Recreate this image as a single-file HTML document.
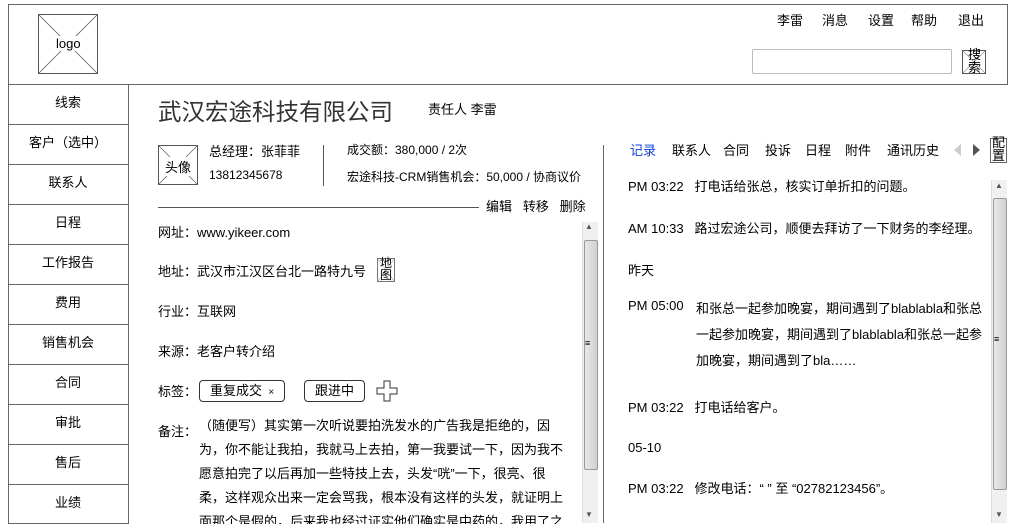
<!DOCTYPE html>
<html><head><meta charset="utf-8"><style>
*{margin:0;padding:0;box-sizing:border-box}
body{width:1028px;height:532px;background:#fff;position:relative;overflow:hidden;font-family:"Liberation Sans","Noto Sans CJK SC",sans-serif;font-size:13px;color:#000}
.a{position:absolute;white-space:nowrap}
.xbox{position:absolute;border:1px solid #555;background:#fff}
.xbox svg{position:absolute;left:0;top:0;width:100%;height:100%}
.nav div{position:absolute;left:8px;width:120px;height:40px;border-top:1px solid #666;text-align:center;line-height:36px}
.sb{position:absolute;width:16px;background:#f0f0f0;border-left:1px solid #ddd}
.thumb{position:absolute;left:1px;width:14px;background:linear-gradient(90deg,#e8e8e8,#d0d0d0);border:1px solid #999;border-radius:2px}
.tag{position:absolute;border:1px solid #333;border-radius:4px;height:22px;line-height:20px;padding:0 10px}
</style></head><body>
<div style="position:absolute;left:8px;top:4px;width:1000px;height:81px;border:1px solid #666"></div>
<div class="xbox" style="left:38px;top:14px;width:60px;height:60px"><svg viewBox="0 0 60 60" preserveAspectRatio="none"><path d="M0 0L60 60M60 0L0 60" stroke="#555" stroke-width="0.8"/></svg><div class="a" style="left:17px;top:21px;background:#fff">logo</div></div>
<div class="a" style="left:777px;top:10px">李雷</div>
<div class="a" style="left:822px;top:10px">消息</div>
<div class="a" style="left:868px;top:10px">设置</div>
<div class="a" style="left:911px;top:10px">帮助</div>
<div class="a" style="left:958px;top:10px">退出</div>
<div style="position:absolute;left:752px;top:49px;width:200px;height:25px;border:1px solid #bbb;border-radius:2px"></div>
<div class="xbox" style="left:962px;top:50px;width:24px;height:24px"><svg viewBox="0 0 24 24" preserveAspectRatio="none"><path d="M0 0L24 24M24 0L0 24" stroke="#777" stroke-width="0.6"/></svg><div class="a" style="left:5px;top:-3px;line-height:13px;font-size:13px">搜<br>索</div></div>

<div style="position:absolute;left:8px;top:84px;width:121px;height:440px;border-left:1px solid #666;border-right:1px solid #666;border-bottom:1px solid #666"></div>
<div class="nav">
<div style="top:84px">线索</div><div style="top:124px">客户（选中）</div><div style="top:164px">联系人</div><div style="top:204px">日程</div><div style="top:244px">工作报告</div><div style="top:284px">费用</div><div style="top:324px">销售机会</div><div style="top:364px">合同</div><div style="top:404px">审批</div><div style="top:444px">售后</div><div style="top:484px">业绩</div>
</div>

<div class="a" style="left:158px;top:93px;font-size:23.5px;color:#333">武汉宏途科技有限公司</div>
<div class="a" style="left:428px;top:99px">责任人 李雷</div>
<div class="xbox" style="left:158px;top:145px;width:40px;height:40px"><svg viewBox="0 0 40 40" preserveAspectRatio="none"><path d="M0 0L40 40M40 0L0 40" stroke="#555" stroke-width="0.7"/></svg><div class="a" style="left:6px;top:11px;background:#fff">头像</div></div>
<div class="a" style="left:209px;top:141px">总经理：张菲菲</div>
<div class="a" style="left:209px;top:168px;font-size:12px">13812345678</div>
<div style="position:absolute;left:323px;top:145px;width:1px;height:41px;background:#555"></div>
<div class="a" style="left:347px;top:141px;font-size:12px">成交额：380,000 / 2次</div>
<div class="a" style="left:347px;top:168px;font-size:12px">宏途科技-CRM销售机会：50,000 / 协商议价</div>
<div style="position:absolute;left:158px;top:207px;width:321px;height:1px;background:#555"></div>
<div class="a" style="left:486px;top:196px">编辑&nbsp;&nbsp;&nbsp;转移&nbsp;&nbsp;&nbsp;删除</div>

<div class="a" style="left:158px;top:222px">网址：www.yikeer.com</div>
<div class="a" style="left:158px;top:261px">地址：武汉市江汉区台北一路特九号</div>
<div class="xbox" style="left:377px;top:258px;width:18px;height:24px;border-color:#777"><svg viewBox="0 0 18 24" preserveAspectRatio="none"><path d="M0 0L18 24M18 0L0 24" stroke="#777" stroke-width="0.5"/></svg><div class="a" style="left:2px;top:-2px;line-height:12px;font-size:12px">地<br>图</div></div>
<div class="a" style="left:158px;top:301px">行业：互联网</div>
<div class="a" style="left:158px;top:341px">来源：老客户转介绍</div>
<div class="a" style="left:158px;top:381px">标签：</div>
<div class="tag" style="left:199px;top:380px">重复成交 <span style="font-size:10px">&nbsp;×</span></div>
<div class="tag" style="left:304px;top:380px">跟进中</div>
<svg style="position:absolute;left:376px;top:380px" width="22" height="22" viewBox="0 0 22 22"><path d="M8 1H14V8H21V14H14V21H8V14H1V8H8Z" fill="none" stroke="#333" stroke-width="1"/></svg>
<div class="a" style="left:158px;top:421px">备注：</div>
<div style="position:absolute;left:199px;top:414px;width:380px;height:110px;overflow:hidden;line-height:24px">（随便写）其实第一次听说要拍洗发水的广告我是拒绝的，因<br>为，你不能让我拍，我就马上去拍，第一我要试一下，因为我不<br>愿意拍完了以后再加一些特技上去，头发“咣”一下，很亮、很<br>柔，这样观众出来一定会骂我，根本没有这样的头发，就证明上<br>面那个是假的，后来我也经过证实他们确实是中药的，我用了之</div>
<div class="sb" style="left:582px;top:222px;height:301px"><div class="thumb" style="top:18px;height:230px"></div><div class="a" style="left:2px;top:116px;font-size:9px">≡</div></div>
<div class="a" style="left:585px;top:222px;font-size:8px;color:#555">▲</div>
<div class="a" style="left:585px;top:510px;font-size:8px;color:#555">▼</div>

<div style="position:absolute;left:603px;top:145px;width:1px;height:378px;background:#666"></div>
<div class="a" style="left:630px;top:140px;color:#0a3de0">记录</div>
<div class="a" style="left:672px;top:140px">联系人</div>
<div class="a" style="left:723px;top:140px">合同</div>
<div class="a" style="left:765px;top:140px">投诉</div>
<div class="a" style="left:805px;top:140px">日程</div>
<div class="a" style="left:845px;top:140px">附件</div>
<div class="a" style="left:887px;top:140px">通讯历史</div>
<svg style="position:absolute;left:953px;top:143px" width="30" height="14"><path d="M1 7L8 1V13Z" fill="#ccc"/><path d="M20 1L27 7L20 13Z" fill="#555"/></svg>
<div class="xbox" style="left:990px;top:138px;width:17px;height:25px;border-color:#666"><div class="a" style="left:1px;top:-3px;line-height:13px;font-size:13px">配<br>置</div></div>

<div class="a" style="left:628px;top:176px">PM 03:22&nbsp;&nbsp;&nbsp;打电话给张总，核实订单折扣的问题。</div>
<div class="a" style="left:628px;top:218px">AM 10:33&nbsp;&nbsp;&nbsp;路过宏途公司，顺便去拜访了一下财务的李经理。</div>
<div class="a" style="left:628px;top:260px">昨天</div>
<div class="a" style="left:628px;top:298px">PM 05:00</div>
<div class="a" style="left:696px;top:296px;line-height:26px">和张总一起参加晚宴，期间遇到了blablabla和张总<br>一起参加晚宴，期间遇到了blablabla和张总一起参<br>加晚宴，期间遇到了bla……</div>
<div class="a" style="left:628px;top:397px">PM 03:22&nbsp;&nbsp;&nbsp;打电话给客户。</div>
<div class="a" style="left:628px;top:440px">05-10</div>
<div class="a" style="left:628px;top:478px">PM 03:22&nbsp;&nbsp;&nbsp;修改电话：“ ” 至 “02782123456”。</div>
<div class="sb" style="left:991px;top:180px;height:343px"><div class="thumb" style="top:18px;height:292px"></div><div class="a" style="left:2px;top:154px;font-size:9px">≡</div></div>
<div class="a" style="left:995px;top:181px;font-size:8px;color:#555">▲</div>
<div class="a" style="left:995px;top:510px;font-size:8px;color:#555">▼</div>
</body></html>
